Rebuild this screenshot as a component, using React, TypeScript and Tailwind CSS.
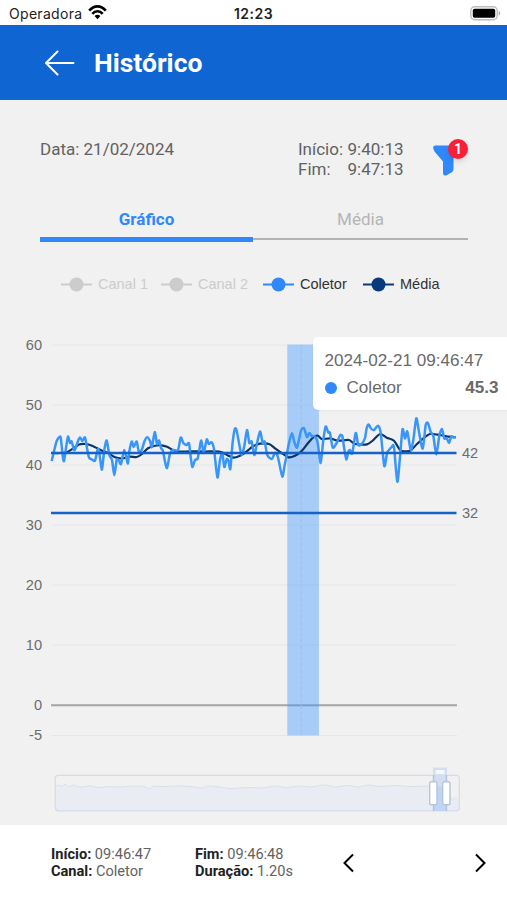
import React, { useState } from "react";

type Point = [number, number];

const legend = [
  { name: "Canal 1", color: "#cccccc", active: false },
  { name: "Canal 2", color: "#cccccc", active: false },
  { name: "Coletor", color: "#2f88fc", active: true },
  { name: "Média", color: "#063a7c", active: true },
];

const ticks = [
  { label: "60", y: 345 },
  { label: "50", y: 405 },
  { label: "40", y: 465 },
  { label: "30", y: 525 },
  { label: "20", y: 585 },
  { label: "10", y: 645 },
  { label: "0", y: 705 },
  { label: "-5", y: 735.5 },
];

const coletor: Point[] = [
  [51.7, 461], [54.3, 450], [56.7, 441], [59.5, 437], [60.8, 438], [62.6, 455], [64, 461], [66.3, 446],
  [68, 436.5], [70, 443], [71.7, 441.5], [74, 450], [75.7, 448], [77.7, 441.7], [80, 437.5], [82.3, 441],
  [85, 437.5], [87, 448], [89, 457.5], [92, 459.5], [95, 460.7], [97.5, 450], [98.8, 450], [100.3, 460],
  [102, 469.5], [104.3, 450], [106.7, 440.5], [109.3, 455], [112, 460], [114.3, 475.3], [116.7, 460],
  [119, 460.7], [121, 464], [124.3, 450], [127.7, 463.5], [129, 453], [131.7, 441.5], [133.7, 447],
  [136.7, 441.5], [138.7, 451], [141.7, 450], [144.3, 441.7], [147, 437.3], [150, 441], [152, 447],
  [154.7, 432], [157, 444], [159, 440.5], [161, 448], [163, 451], [164.7, 460], [167, 468], [170, 453.5],
  [173, 450], [178, 450], [180.7, 437.5], [183.3, 443], [186.5, 445], [189, 443.3], [190.7, 457],
  [192.3, 467], [195, 460], [197.5, 459], [199.3, 450], [201.3, 440.5], [203.7, 453], [206.7, 439.5],
  [208.7, 444], [211.7, 442.3], [214, 449], [216, 467], [217.7, 477.5], [220, 460], [222.3, 453],
  [224.3, 467], [226.7, 459], [228.6, 461], [230.3, 469], [232.6, 443], [234.7, 429.3], [236.5, 430],
  [239, 443], [241.7, 455], [244.3, 446], [247, 430], [249.3, 443], [251.6, 441.5], [254.3, 455],
  [256.7, 445], [260, 431.5], [262.7, 443], [264.7, 441.7], [267.3, 455], [271.7, 459], [275, 453],
  [277, 454], [279, 462], [282.3, 476.7], [284.7, 465], [286.7, 455], [289, 443], [292, 433.3],
  [294.3, 442], [297, 447.7], [299.3, 438], [301.3, 430], [304, 428.3], [307, 437], [309.3, 433],
  [311.7, 436], [315, 436.5], [317.7, 443], [320.7, 463], [323.3, 440], [325.7, 426.5], [328.3, 432.5],
  [330, 433], [332.7, 447.5], [336.7, 443], [340, 435.5], [342.3, 436], [344, 447], [346.3, 459.3],
  [348.3, 451.7], [350, 450], [352.3, 453.3], [355.7, 433], [358.3, 445], [362, 443.5], [365, 438],
  [366.7, 428], [368.7, 424.5], [371, 428.5], [374, 430], [378, 425.7], [380.7, 433], [384.3, 466],
  [387, 453], [389, 450], [391.7, 447], [394, 447], [397.3, 481.7], [400, 457], [402.5, 429.3],
  [405, 438.5], [407.3, 431.5], [410.7, 450], [413.3, 440], [416.3, 418.3], [419, 432], [422.7, 448.7],
  [425.7, 425], [428, 423.3], [430.7, 432], [433.3, 436], [436.3, 454.5], [439.3, 436], [442, 429],
  [444.3, 438.5], [446.7, 438], [449, 443], [451.3, 436.5], [453.3, 437.5], [455.7, 437],
];

const media: Point[] = [
  [51.7, 453], [60, 453], [67, 452.2], [75, 447.3], [79, 444.5], [85, 444], [92, 445.7], [102, 450.7],
  [108, 453], [115, 457.3], [122, 458.5], [130, 456.7], [136.7, 457], [142, 454], [148, 448.3],
  [155, 445.7], [161, 445.3], [167, 446.7], [175, 451], [185, 451.5], [193, 451.3], [205, 451.5],
  [215, 451.3], [222, 452.3], [228, 455.5], [233.3, 457.7], [240, 455.7], [246.7, 451.5],
  [253, 446.3], [260, 443.7], [269, 444], [275, 448.3], [281.7, 453], [288.3, 457.3], [295, 455.7],
  [301.7, 451], [308.3, 442.7], [313.3, 437.3], [318, 435.8], [322, 439.2], [330, 438.3], [338, 440.7],
  [349, 440], [355, 444], [367, 444.3], [373, 440.3], [380, 434], [386.7, 437.7], [394, 440.7],
  [400, 450], [405, 451.3], [410.7, 450.5], [416.7, 444.3], [423.3, 438.3], [430, 434], [438, 434.7],
  [446.7, 436.3], [455.7, 437.3],
];

const overview: Point[] = [
  [56, 786], [60, 785], [62, 787], [65, 784], [69, 787], [73, 785], [80, 787], [90, 786], [98, 787.5],
  [108, 786.5], [120, 787], [135, 786], [144, 786.5], [150, 789], [153, 786.5], [165, 786.5],
  [180, 786], [195, 787], [202, 788], [208, 786], [220, 787], [230, 788.5], [240, 788], [250, 787.5],
  [262, 788], [275, 786], [287, 787.5], [300, 786], [310, 787], [325, 785], [335, 787],
  [348, 785.5], [358, 787], [368, 785], [380, 786.5], [395, 785.5], [410, 786.5], [428, 786],
  [436, 785], [440, 787], [446, 784], [452, 800], [455, 797],
];

// same smoothing the chart lines use everywhere
const smooth = (points: Point[]): string => {
  let d = `M${points[0][0]} ${points[0][1]}`;
  for (let i = 0; i < points.length - 1; i++) {
    const p0 = points[i - 1] || points[i];
    const p1 = points[i];
    const p2 = points[i + 1];
    const p3 = points[i + 2] || p2;
    const k = 8;
    d += `C${p1[0] + (p2[0] - p0[0]) / k} ${p1[1] + (p2[1] - p0[1]) / k} ${p2[0] - (p3[0] - p1[0]) / k} ${p2[1] - (p3[1] - p1[1]) / k} ${p2[0]} ${p2[1]}`;
  }
  return d;
};

const StatusBar: React.FC = () => (
  <div className="relative flex h-[25px] items-center justify-between bg-white pl-[9px] pr-[6px] pt-[3px] font-['Inter',sans-serif] text-[#222]">
    <div className="flex items-center gap-[6px]">
      <span className="text-[14px] leading-none tracking-[0.3px]">Operadora</span>
      <svg className="-mt-[3px]" width="19" height="15" viewBox="0 0 19 15" fill="none" stroke="#000" strokeWidth="2.6">
        <path d="M1.2 5.6C6-.1 13-.1 17.8 5.6" />
        <path d="M4.3 8.8C7.2 5.4 11.8 5.4 14.7 8.8" />
        <path d="M6.600 11.100c1.600-1.800 4.200-1.800 5.800 0L9.500 14.200z" fill="#000" stroke="none" />
      </svg>
    </div>
    <span className="absolute inset-x-0 text-center text-[14px] font-semibold leading-none tracking-[0.500px]">12:23</span>
    <svg className="-mt-[2px]" width="31" height="15" viewBox="0 0 31 15">
      <rect x="0.8" y="0.8" width="26.4" height="13" rx="4" fill="#fff" stroke="#bdbdbd" strokeWidth="1.4" />
      <rect x="2.8" y="2.8" width="22.4" height="9" rx="1.8" fill="#000" />
      <path d="M28.7 5v4.6c2-.7 2-3.9 0-4.6z" fill="#aaa" />
    </svg>
  </div>
);

const Chart: React.FC = () => (
  <svg className="block" width="507" height="500" viewBox="0 325 507 500" fill="none">
    {ticks.map((t) => (
      <g key={t.label}>
        <line x1="51" x2="457" y1={t.y} y2={t.y} stroke="#e3e6eb" strokeWidth="1" />
        <text x="42" y={t.y + 4.6} textAnchor="end" fill="#6b6c6f" className="font-['Liberation_Sans',sans-serif] text-[14.6px]">
          {t.label}
        </text>
      </g>
    ))}
    <line x1="51" x2="457" y1="705.3" y2="705.3" stroke="#a5a5a5" strokeWidth="2" />
    <rect x="287.3" y="344.5" width="31.6" height="391" fill="#a6ccf7" />
    <path d="M287.3 405h31.6M287.3 465h31.6M287.3 525h31.6M287.3 585h31.6M287.3 645h31.6" stroke="#a1c6f0" />
    <path d="M287.3 705.3h31.6" stroke="#789dc8" strokeWidth="2" />
    <path d="M301.3 345v390.5" stroke="#a9bed6" strokeDasharray="4 2" />
    <path d={smooth(media)} stroke="#0b3566" strokeWidth="2.2" />
    <path d={smooth(coletor)} stroke="#3896fb" strokeWidth="2.5" strokeLinejoin="round" />
    <path d="M51 453h405.5M51 513h405.5" stroke="#1762c8" strokeWidth="2.4" />
    <g fill="#6b6c6f" className="font-['Liberation_Sans',sans-serif] text-[14.6px]">
      <text x="462" y="457.500">42</text>
      <text x="462" y="517.500">32</text>
    </g>

    {/* zoom slider */}
    <path d={`${smooth(overview)}L459 797V811H56Z`} fill="#e9ecf2" />
    <path d={smooth(overview)} stroke="#d7dce7" strokeWidth="0.9" />
    <rect x="55.3" y="775.3" width="404" height="35.5" rx="3" stroke="#d4dbed" strokeWidth="1.2" />
    <path d="M433.5 811V786h13v25z" fill="#bfd5f5" />
    <rect x="433" y="767.5" width="14" height="19" fill="#d3def0" />
    <rect x="435.5" y="770" width="9" height="4" rx="1" fill="#f6f8fc" />
    <path d="M433.5 775v36M446.5 775v36" stroke="#b3c1dc" strokeWidth="1.4" />
    <rect x="429.7" y="781.7" width="7.3" height="23" rx="1.8" fill="#fff" stroke="#b7c4dd" strokeWidth="1.4" />
    <rect x="442.7" y="781.7" width="7.3" height="23" rx="1.8" fill="#fff" stroke="#b7c4dd" strokeWidth="1.4" />
  </svg>
);

export default function App() {
  const [tab, setTab] = useState<string>("grafico");

  return (
    <div className="flex h-[900px] w-[507px] flex-col overflow-hidden bg-[#f1f1f1] font-['Roboto',sans-serif] text-[#626262]">
      <StatusBar />
      <header className="flex h-[75px] shrink-0 items-center bg-[#0f65d2] pl-[45px] text-white">
        <svg width="30" height="26" viewBox="0 0 30 26" fill="none" stroke="currentColor" strokeWidth="2" strokeLinecap="round" strokeLinejoin="round">
          <path d="M28.5 13H1M12.5 1.5L1 13l11.5 11.5" />
        </svg>
        <h1 className="ml-[19px] mt-px text-[26.5px] font-bold leading-none">Histórico</h1>
      </header>

      <main className="flex h-[725px] shrink-0 flex-col">
        <div className="flex h-[100px] pl-10 pt-[39px] text-[17px] leading-[20px]">
          <p className="w-[258px]">Data: 21/02/2024</p>
          <div className="w-[134px]">
            <p className="flex"><span className="w-[49.5px]">Início:</span>9:40:13</p>
            <p className="flex"><span className="w-[49.5px]">Fim:</span>9:47:13</p>
          </div>
          <div className="relative h-10 w-9">
            <svg className="mt-[6px]" width="30" height="32" viewBox="0 0 30 32">
              <path d="M3 .5H25Q29 .5 27 4L21.5 13V24Q21.5 26 19.500 27.5L14.5 30.200Q11 31.5 11 28V16.5L2.5 6.5Q-.5 1 3 .5Z" fill="#2f88fc" />
            </svg>
            <span className="absolute left-4 top-0 flex h-5 w-5 items-center justify-center rounded-full bg-[#f91f36] text-[14px] font-bold text-white shadow-md">1</span>
          </div>
        </div>

        <div className="ml-10 flex h-[42px] w-[428px] text-center text-[17px]">
          <button
            onClick={() => setTab("grafico")}
            className="h-[42px] w-[213px] border-b-[5px] border-[#2f88fc] pt-px text-[17px] font-bold leading-[37px] text-[#2f88fc]"
          >
            Gráfico
          </button>
          <button
            onClick={() => setTab("media")}
            aria-pressed={tab === "media"}
            className="h-[40px] w-[215px] border-b-[2px] border-[#b2b2b2] pt-px text-[#b5b5b5]"
          >
            Média
          </button>
        </div>

        <div className="flex h-[83px] shrink-0 items-start pl-[61px] pt-[34px] font-['Liberation_Sans',sans-serif] text-[14.5px] leading-[17px]">
          {legend.map((item) => (
            <div key={item.name} className="flex w-[100px] shrink-0 items-center gap-[6px] nth-2:w-[102px]">
              <svg width="31" height="15" viewBox="0 0 31 15">
                <path d="M0 7.5h31" stroke={item.color} strokeWidth="2" />
                <circle cx="15.5" cy="7.5" r="7" fill={item.color} />
              </svg>
              <span className={item.active ? "whitespace-nowrap text-[#333]" : "whitespace-nowrap text-[#cccccc]"}>{item.name}</span>
            </div>
          ))}
        </div>

        <div className="relative h-[500px]">
          <Chart />
          <div className="absolute left-[313px] top-[12px] h-[73px] w-[200px] rounded-[5px] bg-white pl-[11.5px] pt-[11px] font-['Liberation_Sans',sans-serif] text-[17.1px] text-[#6a6a6a] shadow-xs">
            <p className="whitespace-nowrap leading-[26px]">2024-02-21 09:46:47</p>
            <div className="mt-px flex w-[174px] items-center leading-[26px]">
              <span className="mr-[10px] h-3 w-3 rounded-full bg-[#2f88fc]" />
              <span>Coletor</span>
              <span className="ml-auto font-bold">45.3</span>
            </div>
          </div>
        </div>
      </main>

      <footer className="flex h-[75px] shrink-0 bg-white pl-[51px] pt-[20.5px] text-[14.6px] leading-[17.5px]">
        <div className="w-[144px]">
          <p><b className="text-[#222]">Início:</b> 09:46:47</p>
          <p><b className="text-[#222]">Canal:</b> Coletor</p>
        </div>
        <div className="w-[147px]">
          <p><b className="text-[#222]">Fim:</b> 09:46:48</p>
          <p><b className="text-[#222]">Duração:</b> 1.20s</p>
        </div>
        <div className="flex h-[35px] w-[145px] items-center justify-between text-black">
          <svg width="13" height="20" viewBox="0 0 13 20" fill="none" stroke="currentColor" strokeWidth="2">
            <path d="M11 1.5L2.5 10l8.5 8.5" />
          </svg>
          <svg width="13" height="20" viewBox="0 0 13 20" fill="none" stroke="currentColor" strokeWidth="2">
            <path d="M2 1.5l8.5 8.5L2 18.5" />
          </svg>
        </div>
      </footer>
    </div>
  );
}
